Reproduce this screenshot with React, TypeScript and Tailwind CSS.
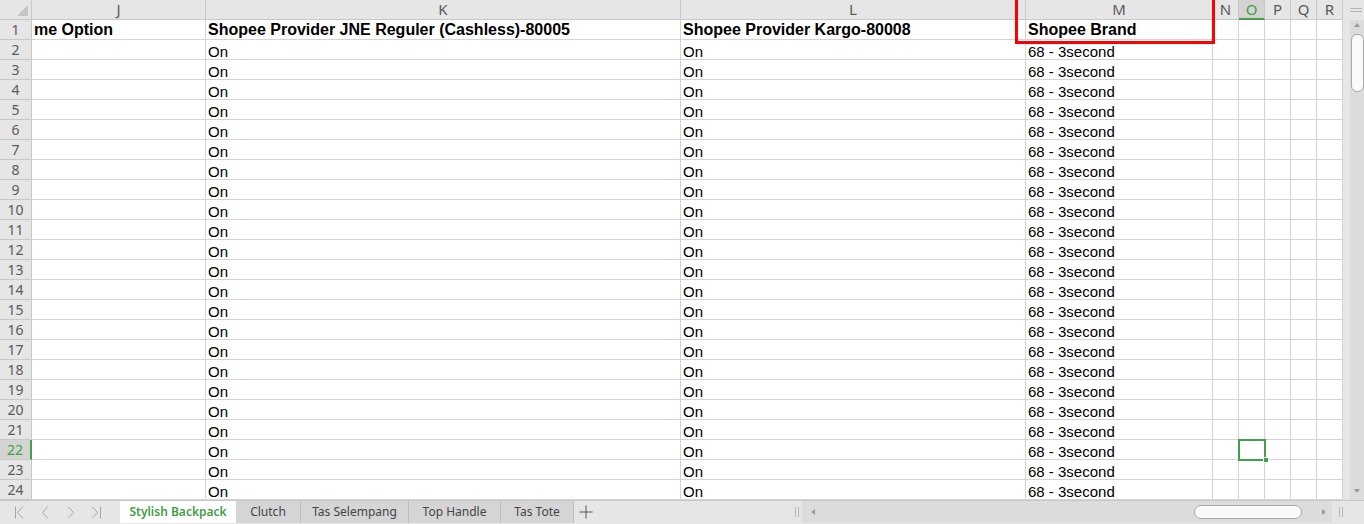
import React from "react";

const GRID = "grid grid-cols-[32px_174px_475px_345px_187px_26px_26px_26px_26px_26px]";
const LETTERS = ["J", "K", "L", "M", "N", "O", "P", "Q", "R"];

function ColHeader() {
  return (
    <div className={`${GRID} h-[20px]`}>
      <div className="relative bg-[#e6e6e6] border-r border-b border-[#c8c8c8]">
        <svg className="absolute right-[3px] bottom-[3px]" width="11" height="11" viewBox="0 0 11 11">
          <polygon points="11,0 11,11 0,11" fill="#c4c4c4" />
        </svg>
      </div>
      {LETTERS.map((l) =>
        l === "O" ? (
          <div
            key={l}
            className="flex items-center justify-center bg-[#d3d3d3] border-r border-[#c8c8c8] border-b-2 border-b-[#42a046] text-[#42a046] text-[15px] leading-none"
          >
            {l}
          </div>
        ) : (
          <div
            key={l}
            className="flex items-center justify-center bg-[#e6e6e6] border-r border-b border-[#c8c8c8] text-[#5a5a5a] text-[15px] leading-none"
          >
            {l}
          </div>
        )
      )}
    </div>
  );
}

function Cell({ text, bold }: { text?: string; bold?: boolean }) {
  return (
    <div
      className={`flex items-end overflow-hidden whitespace-nowrap border-r border-b border-[#d4d4d4] bg-white pl-[2px] text-black ${
        bold ? "font-bold text-[16px] leading-[16px] pb-[1px]" : "text-[15px] leading-[15px]"
      }`}
      style={{ fontFamily: '"Liberation Sans", Arial, sans-serif' }}
    >
      {text}
    </div>
  );
}

function Row({ n }: { n: number }) {
  const first = n === 1;
  const sel = n === 22;
  return (
    <div className={`${GRID} h-[20px]`}>
      {sel ? (
        <div className="flex items-center justify-center bg-[#d3d3d3] border-b border-[#c8c8c8] border-r-2 border-r-[#42a046] text-[#42a046] text-[14px] leading-none">
          {n}
        </div>
      ) : (
        <div className="flex items-center justify-center bg-[#e6e6e6] border-r border-b border-[#c8c8c8] text-[#5a5a5a] text-[14px] leading-none">
          {n}
        </div>
      )}
      {first ? (
        <>
          <Cell text="me Option" bold />
          <Cell text="Shopee Provider JNE Reguler (Cashless)-80005" bold />
          <Cell text="Shopee Provider Kargo-80008" bold />
          <Cell text="Shopee Brand" bold />
        </>
      ) : (
        <>
          <Cell />
          <Cell text="On" />
          <Cell text="On" />
          <Cell text="68 - 3second" />
        </>
      )}
      <Cell />
      <Cell />
      <Cell />
      <Cell />
      <Cell />
    </div>
  );
}

function VScroll() {
  return (
    <div className="flex w-[21px] flex-col bg-[#e6e6e6]">
      <div className="flex h-[20px] items-center justify-end pr-[2px]">
        <div className="flex w-[12px] flex-col gap-[2px]">
          <div className="h-px bg-[#b4b4b4]" />
          <div className="h-px bg-[#b4b4b4]" />
        </div>
      </div>
      <div className="ml-[7px] flex flex-1 flex-col items-center bg-[#dcdcdc] pb-[6px]">
        <svg className="mt-[2px]" width="8" height="6" viewBox="0 0 8 6">
          <polygon points="4,1 7,5 1,5" fill="#9a9a9a" />
        </svg>
        <div className="mt-[6px] h-[58px] w-[13px] rounded-[6px] border border-[#aaaaaa] bg-[#fafafa]" />
        <div className="flex-1" />
        <svg width="8" height="6" viewBox="0 0 8 6">
          <polygon points="1,1 7,1 4,5" fill="#9a9a9a" />
        </svg>
      </div>
    </div>
  );
}

function Tab({ label, w, active }: { label: string; w: string; active?: boolean }) {
  return active ? (
    <div className={`${w} flex items-center justify-center bg-white text-[12px] font-semibold text-[#42a046]`}>
      {label}
    </div>
  ) : (
    <div className={`${w} flex items-center justify-center border-r border-[#bdbdbd] bg-[#d5d5d5] text-[12px] text-[#444]`}>
      {label}
    </div>
  );
}

function TabBar() {
  return (
    <div
      className="flex h-[24px] border-t border-[#c8c8c8] bg-[#e6e6e6]"
      style={{ fontFamily: '"Noto Sans", "Open Sans", sans-serif' }}
    >
      <div className="flex h-[22px] w-[120px] items-center">
        <svg width="120" height="22" viewBox="0 0 120 22" fill="none" stroke="#a6a6a6" strokeWidth="1">
          <path d="M15.5 5.5v12M23 5.5l-5.5 6 5.5 6" />
          <path d="M48 5.5l-5.5 6 5.5 6" />
          <path d="M68 5.5l5.5 6-5.5 6" />
          <path d="M92 5.5l5.5 6-5.5 6M100.5 5.5v12" />
        </svg>
      </div>
      <div className="flex h-[22px]">
        <Tab label="Stylish Backpack" w="w-[116px]" active />
        <Tab label="Clutch" w="w-[65px]" />
        <Tab label="Tas Selempang" w="w-[108px]" />
        <Tab label="Top Handle" w="w-[92px]" />
        <Tab label="Tas Tote" w="w-[73px]" />
      </div>
      <div className="flex h-[22px] w-[24px] items-center justify-center">
        <svg width="14" height="14" viewBox="0 0 14 14" stroke="#555" strokeWidth="1">
          <path d="M7 0.5v13M0.5 7h13" />
        </svg>
      </div>
      <div className="w-[194px]" />
      <div className="flex h-[22px] w-[10px] items-center justify-center gap-[2px]">
        <div className="h-[10px] w-px bg-[#b4b4b4]" />
        <div className="h-[10px] w-px bg-[#b4b4b4]" />
      </div>
      <div className="flex h-[22px] w-[530px] items-center bg-[#dcdcdc]">
        <svg className="ml-[8px]" width="6" height="8" viewBox="0 0 6 8">
          <polygon points="1,4 5,1 5,7" fill="#9a9a9a" />
        </svg>
        <div className="flex-1" />
        <div className="h-[14px] w-[108px] rounded-full border border-[#aaaaaa] bg-[#fafafa]" />
        <div className="w-[19px]" />
        <svg width="6" height="8" viewBox="0 0 6 8">
          <polygon points="1,1 5,4 1,7" fill="#9a9a9a" />
        </svg>
        <div className="w-[5px]" />
      </div>
      <div className="flex h-[22px] items-center gap-[2px] pl-[7px]">
        <div className="h-[10px] w-px bg-[#b4b4b4]" />
        <div className="h-[10px] w-px bg-[#b4b4b4]" />
      </div>
    </div>
  );
}

export default function App() {
  const rows = Array.from({ length: 24 }, (_, i) => i + 1);
  return (
    <div
      className="h-[524px] w-[1364px] overflow-hidden bg-white"
      style={{ fontFamily: '"Noto Sans", "Open Sans", sans-serif' }}
    >
      <div className="flex h-[500px]">
        <div className="relative w-[1343px] overflow-hidden">
          <ColHeader />
          {rows.map((n) => (
            <Row key={n} n={n} />
          ))}
          {/* red highlight around Shopee Brand */}
          <div className="absolute left-[1015px] top-[-3px] h-[47px] w-[200px] border-[3px] border-[#ff0000]" />
          {/* active cell O22 */}
          <div className="absolute left-[1238px] top-[439px] h-[22px] w-[28px] border-2 border-[#42a046]" />
          <div className="absolute left-[1263px] top-[457px] h-[6px] w-[6px] border border-white bg-[#42a046]" />
        </div>
        <VScroll />
      </div>
      <TabBar />
    </div>
  );
}
